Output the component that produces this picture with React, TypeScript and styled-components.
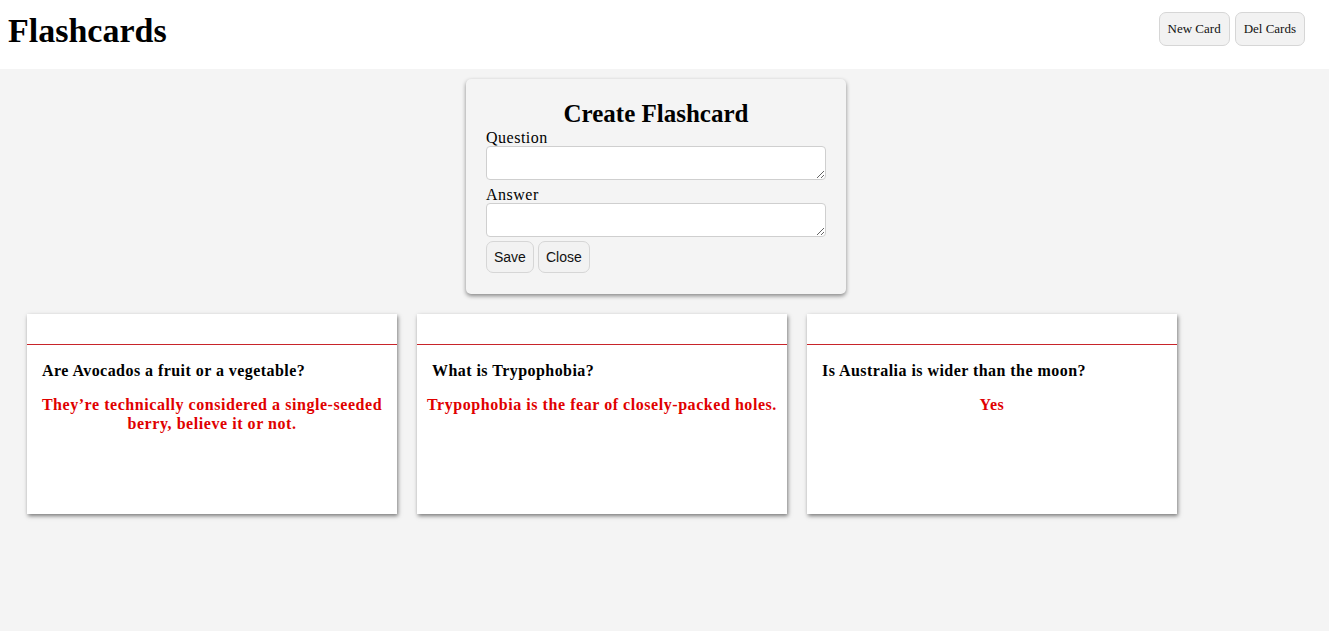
import React from "react";
import styled, { createGlobalStyle } from "styled-components";

const Global = createGlobalStyle`
  html, body { margin: 0; padding: 0; background: #f4f4f4; }
  body { font-family: "Liberation Serif", "Times New Roman", serif; color: #000; }
  * { box-sizing: border-box; }
`;

const Header = styled.header`
  height: 69px;
  background: #fff;
  display: flex;
  align-items: center;
  justify-content: space-between;
  padding: 0 24px 0 8px;
`;

const Title = styled.h1`
  margin: -7px 0 0;
  font-size: 34px;
  font-weight: bold;
`;

const HeaderActions = styled.div`
  display: flex;
  gap: 5px;
  margin-top: -12px;
`;

const SmallButton = styled.button<{ $sans?: boolean }>`
  height: ${(p) => (p.$sans ? "32px" : "34px")};
  padding: 0 ${(p) => (p.$sans ? "7px" : "8px")};
  background: #f2f2f2;
  border: 1px solid #d6d6d6;
  border-radius: 7px;
  font-family: ${(p) => (p.$sans ? '"Liberation Sans", Arial, sans-serif' : '"Liberation Serif", serif')};
  font-size: ${(p) => (p.$sans ? "14px" : "13px")};
  color: #111;
  cursor: pointer;
`;

const Main = styled.main`
  padding: 10px 17px 0 0;
`;

const FormPanel = styled.section`
  width: 380px;
  margin: 0 auto;
  background: #f4f4f4;
  border-radius: 5px;
  box-shadow: 0 2px 4px rgba(0, 0, 0, 0.45);
  padding: 20px 20px 21px;
  display: flex;
  flex-direction: column;
`;

const FormTitle = styled.h2`
  margin: 1px 0 1px;
  text-align: center;
  font-size: 25px;
  font-weight: bold;
  line-height: 28px;
`;

const Label = styled.label`
  font-size: 16px;
  letter-spacing: 0.5px;
  line-height: 17px;
`;

const TextArea = styled.textarea`
  display: block;
  width: 340px;
  height: 34px;
  margin: 0 0 6px;
  border: 1px solid #cfcfcf;
  border-radius: 4px;
  background: #fff;
  resize: vertical;
`;

const FormButtons = styled.div`
  display: flex;
  gap: 4px;
  margin-top: -2px;
`;

const CardGrid = styled.div`
  display: flex;
  flex-wrap: wrap;
  gap: 20px;
  padding: 20px 10px 20px 27px;
`;

const Card = styled.article`
  width: 370px;
  height: 200px;
  background: #fff;
  box-shadow: 1px 2px 4px rgba(0, 0, 0, 0.5);
  display: flex;
  flex-direction: column;
`;

const CardTop = styled.div`
  height: 31px;
  border-bottom: 1px solid #c8242a;
`;

const CardBody = styled.div`
  padding: 16px 15px 0;
`;

const Question = styled.h3`
  margin: 0;
  font-size: 16px;
  letter-spacing: 0.45px;
  font-weight: bold;
  line-height: 20px;
`;

const Answer = styled.p`
  margin: 14px -6px 0;
  color: #e00000;
  text-align: center;
  font-weight: bold;
  font-size: 16px;
  letter-spacing: 0.55px;
  line-height: 19px;
`;

const cards = [
  {
    q: "Are Avocados a fruit or a vegetable?",
    a: "They\u2019re technically considered a single-seeded berry, believe it or not.",
  },
  { q: "What is Trypophobia?", a: "Trypophobia is the fear of closely-packed holes." },
  { q: "Is Australia is wider than the moon?", a: "Yes" },
];

export default function App() {
  return (
    <>
      <Global />
      <Header>
        <Title>Flashcards</Title>
        <HeaderActions>
          <SmallButton>New Card</SmallButton>
          <SmallButton>Del Cards</SmallButton>
        </HeaderActions>
      </Header>
      <Main>
        <FormPanel>
          <FormTitle>Create Flashcard</FormTitle>
          <Label>Question</Label>
          <TextArea />
          <Label>Answer</Label>
          <TextArea />
          <FormButtons>
            <SmallButton $sans>Save</SmallButton>
            <SmallButton $sans>Close</SmallButton>
          </FormButtons>
        </FormPanel>
        <CardGrid>
          {cards.map((c) => (
            <Card key={c.q}>
              <CardTop />
              <CardBody>
                <Question>{c.q}</Question>
                <Answer>{c.a}</Answer>
              </CardBody>
            </Card>
          ))}
        </CardGrid>
      </Main>
    </>
  );
}
